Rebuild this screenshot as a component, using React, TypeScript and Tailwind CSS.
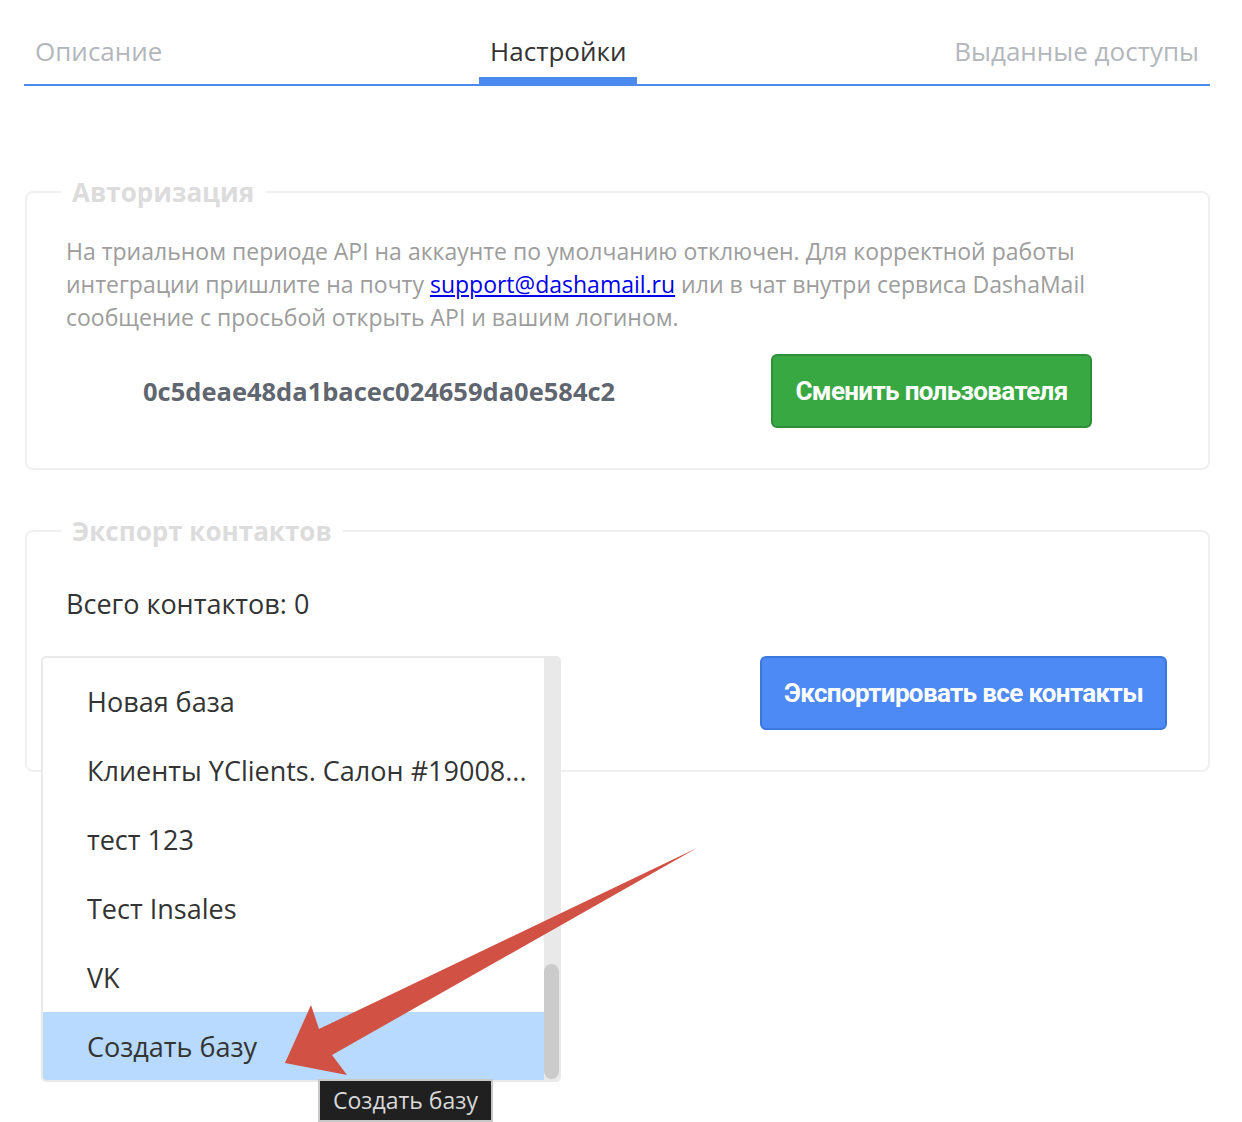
import React from "react";

type Tab = { id: string; label: string; active?: boolean };

const tabs: Tab[] = [
  { id: "description", label: "Описание" },
  { id: "settings", label: "Настройки", active: true },
  { id: "access", label: "Выданные доступы" },
];

const bases = [
  "Новая база",
  "Клиенты YClients. Салон #19008...",
  "тест 123",
  "Тест Insales",
  "VK",
  "Создать базу",
];

const font = "font-['Open_Sans','Noto_Sans',sans-serif]";
const buttonFont = "font-['Roboto','Open_Sans',sans-serif]";

const Tabs = () => (
  <div className="mr-[32px] ml-[24px] flex justify-between border-b-2 border-[#4d8af0] pt-[33px]">
    {tabs.map((tab) => (
      <div
        key={tab.id}
        className={`border-b-[7px] px-[11px] pb-[8px] text-[26px] leading-[36px] ${
          tab.active ? "border-[#4d8af0] text-[#333]" : "border-transparent text-[#b3b7bc]"
        }`}
      >
        {tab.label}
      </div>
    ))}
  </div>
);

const Section = ({ title, children, className = "" }: { title: string; children: React.ReactNode; className?: string }) => (
  <fieldset className={`mr-[32px] ml-[25px] rounded-lg border-2 border-[#f0f0f0] pr-[39px] pb-[40px] pl-[39px] ${className}`}>
    <legend className="-ml-[5px] px-[11px] text-[26px] leading-[36px] font-bold text-[#dcdcdc]">{title}</legend>
    {children}
  </fieldset>
);

const BaseDropdown = () => (
  <div className="absolute top-0 left-[-25px] z-10 flex h-[426px] w-[520px] overflow-hidden rounded-[5px] border-2 border-[#e9e9e9] bg-white">
    <ul className="flex-1 pt-[9px]">
      {bases.map((name, i) => (
        <li
          key={name}
          className={`h-[69px] pl-[44px] text-[27px] leading-[69px] whitespace-nowrap text-[#333] ${
            i === bases.length - 1 ? "bg-[#b8dafe]" : ""
          }`}
        >
          {name}
        </li>
      ))}
    </ul>
    <div className="flex w-[15px] flex-col justify-end bg-[#e9e9e9]">
      <div className="mb-[1px] h-[115px] rounded-full bg-[#cbcbcb]" />
    </div>
  </div>
);

const Arrow = () => (
  <svg className="pointer-events-none absolute inset-0 z-30" width="1242" height="1122" viewBox="0 0 1242 1122">
    <polygon
      points="697,848 319,1029 311,1005 285,1063 347,1075 332,1055"
      fill="#d15144"
    />
  </svg>
);

export default function App() {
  return (
    <div className={`relative h-[1122px] w-[1242px] overflow-hidden bg-white ${font}`}>
      <Tabs />

      <Section title="Авторизация" className="mt-[88px]">
        <p className="mt-[25px] text-[23px] leading-[33px] text-[#9d9d9d]">
          На триальном периоде API на аккаунте по умолчанию отключен. Для корректной работы
          <br />
          интеграции пришлите на почту{" "}
          <a href="#" className="text-[#0000ee] underline">
            support@dashamail.ru
          </a>{" "}
          или в чат внутри сервиса DashaMail
          <br />
          сообщение с просьбой открыть API и вашим логином.
        </p>
        <div className="mt-[20px] flex items-center justify-between px-[77px]">
          <span className="text-[25.5px] font-bold text-[#5f6670]">0c5deae48da1bacec024659da0e584c2</span>
          <button
            className={`h-[74px] w-[321px] rounded-md border-2 border-[#2f8f38] bg-[#38a843] text-[26px] font-bold tracking-tight text-white ${buttonFont}`}
          >
            Сменить пользователя
          </button>
        </div>
      </Section>

      <Section title="Экспорт контактов" className="mt-[43px]">
        <p className="mt-[37px] text-[27px] leading-[36px] text-[#333]">Всего контактов: 0</p>
        <div className="mt-[34px] flex items-center justify-between">
          <div className="relative h-[74px] w-[480px]">
            <BaseDropdown />
          </div>
          <button
            className={`mr-[2px] h-[74px] w-[407px] rounded-md border-2 border-[#3b78dc] bg-[#4d8af5] text-[26px] font-bold tracking-tight text-white ${buttonFont}`}
          >
            Экспортировать все контакты
          </button>
        </div>
      </Section>

      <div className="absolute top-[1079px] left-[318px] z-20 flex h-[43px] w-[175px] items-center justify-center border-2 border-[#c8c8c8] bg-[#202020] text-[23px] text-[#d8d8d8]">
        Создать базу
      </div>

      <Arrow />
    </div>
  );
}
